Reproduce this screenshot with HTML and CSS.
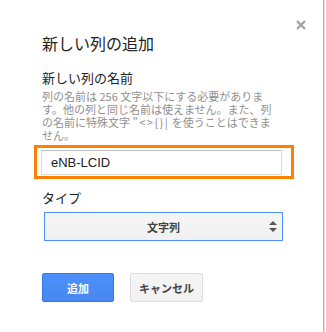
FILE: index.html
```html
<!DOCTYPE html>
<html lang="ja">

<head>
    <meta charset="utf-8">
    <title>新しい列の追加</title>
    <link rel="stylesheet" href="styles.css">
</head>

<body>
    <div class="dialog">
        <span class="close">
            <svg width="10" height="10" viewBox="0 0 10 10">
                <path d="M1 1L9 9M9 1L1 9" stroke="#a0a0a0" stroke-width="2.2" />
            </svg>
        </span>

        <h1 class="title">新しい列の追加</h1>

        <p class="label">新しい列の名前</p>
        <p class="desc">列の名前は 256 文字以下にする必要がありま<br>す。他の列と同じ名前は使えません。また、列<br>の名前に特殊文字 <span class="chars">"&lt;&gt;{}|</span> を使うことはできま<br>せん。</p>

        <div class="highlight">
            <input class="name" type="text" value="eNB-LCID">
        </div>

        <p class="label type-label">タイプ</p>
        <div class="select">
            <span>文字列</span>
            <svg class="arrows" width="8" height="11" viewBox="0 0 8 11">
                <path d="M4 0L8 4H0Z M0 7H8L4 11Z" fill="#555" />
            </svg>
        </div>

        <div class="buttons">
            <button class="btn add">追加</button>
            <button class="btn cancel">キャンセル</button>
        </div>
    </div>
</body>

</html>
```

FILE: styles.css
```css
body {
    margin: 0;
    background-color: white;
    font-family: "Noto Sans CJK JP", "Liberation Sans", sans-serif;
}

.dialog {
    position: relative;
    box-sizing: border-box;
    width: 324px;
    height: 332px;
    padding: 33px 0 0 42px;
    border-right: 1px solid #b4b4b4;
    box-shadow: 1px 0 0 #e2e2e2;
}

.close {
    position: absolute;
    top: 20px;
    right: 17px;
    line-height: 0;
}

.title {
    margin: 0;
    font-size: 16px;
    line-height: 20px;
    font-weight: normal;
    color: #222;
}

.label {
    margin: 17px 0 0;
    font-size: 13px;
    line-height: 16px;
    color: #222;
}

.desc {
    margin: 4px 0 0;
    font-size: 11px;
    line-height: 13px;
    color: #8f8f8f;
    white-space: nowrap;
}

.chars {
    letter-spacing: 1.5px;
}

.highlight {
    box-sizing: border-box;
    width: 260px;
    margin: 3px 0 0 -8px;
    padding: 2px 9px 1px 4px;
    border: 3px solid #ff8000;
}

.name {
    display: block;
    box-sizing: border-box;
    width: 241px;
    height: 25px;
    margin: 0;
    padding: 0 9px;
    border: 1px solid #d9d9d9;
    border-top-color: #c0c0c0;
    font-family: "Liberation Sans", Arial, sans-serif;
    font-size: 13px;
    color: #222;
    outline: none;
}

.type-label {
    margin-top: 11px;
}

.select {
    position: relative;
    box-sizing: border-box;
    width: 239px;
    height: 29px;
    margin: 6px 0 0 2px;
    border: 1px solid #4d90fe;
    background: linear-gradient(#f5f5f5, #f1f1f1);
    display: flex;
    align-items: center;
    justify-content: center;
    font-size: 11px;
    font-weight: bold;
    color: #444;
}

.arrows {
    position: absolute;
    right: 5px;
    top: 8px;
}

.buttons {
    display: flex;
    gap: 16px;
    margin-top: 32px;
}

.btn {
    box-sizing: border-box;
    width: 72px;
    height: 29px;
    margin: 0;
    padding: 0;
    border-radius: 2px;
    font-family: "Noto Sans CJK JP", sans-serif;
    font-size: 11px;
    font-weight: bold;
}

.add {
    background: linear-gradient(#4d90fe, #4787ed);
    border: 1px solid #3079ed;
    color: white;
}

.cancel {
    width: 73px;
    background: linear-gradient(#f5f5f5, #f1f1f1);
    border: 1px solid #dcdcdc;
    color: #444;
}
```
